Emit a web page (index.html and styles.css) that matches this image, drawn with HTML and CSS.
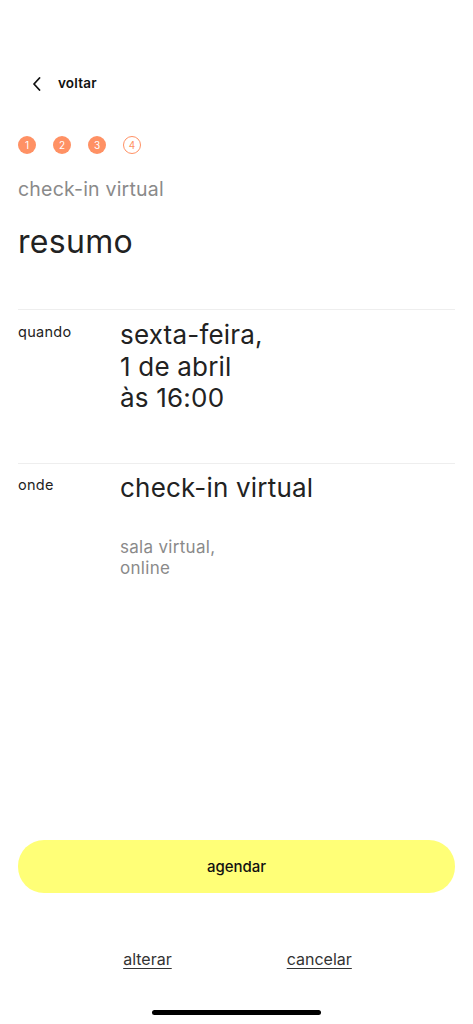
FILE: index.html
```html
<!DOCTYPE html>
<html lang="pt">
<head>
<meta charset="utf-8">
<title>resumo</title>
<link rel="stylesheet" href="styles.css">
</head>
<body>
<div class="screen">
  <header class="topbar">
    <svg class="chev" width="10" height="14" viewBox="0 0 10 14"><path d="M7.5 1 L2 7 L7.5 13" fill="none" stroke="#111" stroke-width="1.8" stroke-linecap="round" stroke-linejoin="round"/></svg>
    <span class="back">voltar</span>
  </header>
  <div class="steps">
    <span class="step done">1</span>
    <span class="step done">2</span>
    <span class="step done">3</span>
    <span class="step current">4</span>
  </div>
  <p class="subtitle">check-in virtual</p>
  <h1 class="title">resumo</h1>

  <section class="row row-when">
    <div class="label">quando</div>
    <div class="value">sexta-feira,<br>1 de abril<br>às 16:00</div>
  </section>
  <section class="row row-where">
    <div class="label">onde</div>
    <div class="col">
      <div class="value">check-in virtual</div>
      <div class="note">sala virtual,<br>online</div>
    </div>
  </section>

  <div class="spacer"></div>

  <button class="primary">agendar</button>
  <nav class="links">
    <a class="link">alterar</a>
    <a class="link">cancelar</a>
  </nav>
  <div class="home"><span class="bar"></span></div>
</div>
</body>
</html>
```
FILE: styles.css
```css
* { box-sizing: border-box; }
html, body { margin: 0; padding: 0; background: #fff; }
body { font-family: Inter, "Noto Sans", "Liberation Sans", sans-serif; color: #222; }
.screen { width: 473px; height: 1024px; display: flex; flex-direction: column; padding: 0 18px; }
.topbar { display: flex; align-items: center; height: 20px; margin-top: 73px; padding-left: 14px; }
.chev { display: block; margin-top: 1px; }
.back { margin-left: 16px; font-size: 13.5px; font-weight: 600; color: #111; letter-spacing: 0.2px; }
.steps { display: flex; gap: 17px; margin-top: 43px; }
.step { width: 18px; height: 18px; border-radius: 50%; display: flex; align-items: center; justify-content: center; font-size: 10px; line-height: 1; }
.step.done { background: #ff9164; color: #fff; }
.step.current { border: 1px solid #ff9164; color: #ff9164; background: #fff; }
.subtitle { margin: 23px 0 0; font-size: 19.5px; line-height: 24px; color: #8a8a8a; font-weight: 400; letter-spacing: 0.2px; }
.title { margin: 21px 0 0; font-size: 32px; line-height: 40px; font-weight: 400; color: #222; letter-spacing: 0.3px; }
.row { display: flex; border-top: 1px solid #eeeeee; }
.row-when { margin-top: 47px; height: 154px; padding-top: 9px; }
.row-where { padding-top: 8px; }
.label { width: 102px; flex: none; font-size: 14.5px; line-height: 20px; color: #222; padding-top: 3px; letter-spacing: 0.3px; }
.value { font-size: 26px; line-height: 31.5px; color: #222; letter-spacing: 0.2px; }
.note { margin-top: 33px; font-size: 17px; line-height: 21px; color: #8a8a8a; letter-spacing: 0.3px; }
.spacer { flex: 1; }
.primary { height: 53px; border: 0; border-radius: 26px; background: #ffff77; font-family: inherit; font-size: 15px; font-weight: 500; color: #111; width: 100%; }
.links { display: flex; justify-content: center; gap: 115px; margin-top: 56px; padding-left: 2px; }
.link { font-size: 16px; line-height: 20px; color: #333; text-decoration: underline; text-underline-offset: 3px; }
.home { height: 50px; display: flex; justify-content: center; align-items: flex-start; padding-top: 36px; margin-top: 5px; }
.bar { width: 169px; height: 5px; border-radius: 3px; background: #000; }
```
